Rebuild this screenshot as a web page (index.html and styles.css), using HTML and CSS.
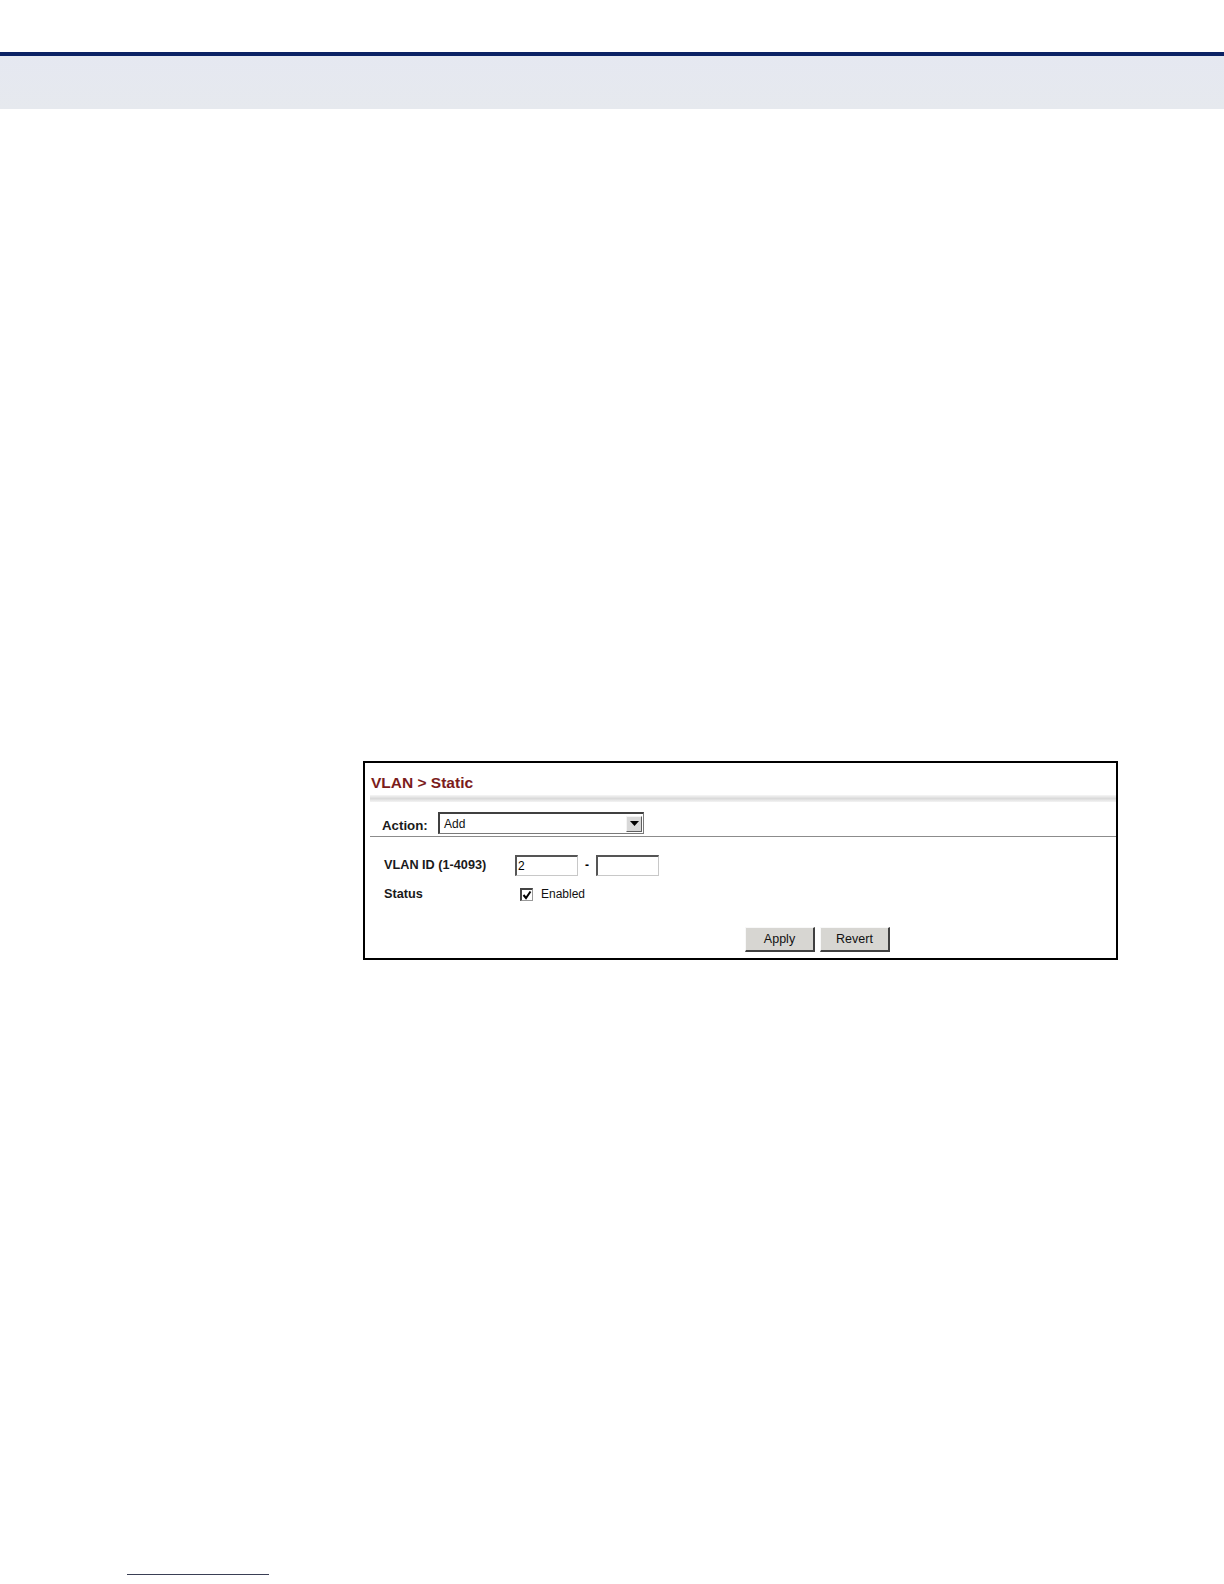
FILE: index.html
```html
<!DOCTYPE html>
<html>
<head>
<meta charset="utf-8">
<link rel="stylesheet" href="styles.css">
</head>
<body>
<div class="page">
  <div class="header">
    <div class="header-rule"></div>
    <div class="header-band"></div>
  </div>
  <div class="content">
    <div class="panel">
      <div class="panel-title">VLAN &gt; Static</div>
      <div class="title-shade"></div>
      <div class="action-row">
        <span class="label action-label">Action:</span>
        <div class="select">
          <span class="select-text">Add</span>
          <span class="select-btn">
            <svg width="9" height="5" viewBox="0 0 9 5"><path d="M0 0h9L4.5 5z" fill="#000"/></svg>
          </span>
        </div>
      </div>
      <div class="divider"></div>
      <div class="form">
        <div class="form-row">
          <span class="label field-label">VLAN ID (1-4093)</span>
          <span class="input">2</span>
          <span class="dash">-</span>
          <span class="input"></span>
        </div>
        <div class="form-row status-row">
          <span class="label field-label">Status</span>
          <span class="checkbox">
            <svg width="10" height="10" viewBox="0 0 10 10"><path d="M1.5 5 L4 8 L8.5 1.5" fill="none" stroke="#000" stroke-width="2"/></svg>
          </span>
          <span class="check-text">Enabled</span>
        </div>
      </div>
      <div class="buttons">
        <span class="btn">Apply</span>
        <span class="btn">Revert</span>
      </div>
    </div>
  </div>
  <div class="footer">
    <div class="footer-line"></div>
  </div>
</div>
</body>
</html>
```
FILE: styles.css
```css
html, body {
  margin: 0;
  padding: 0;
  background: #fff;
}
.page {
  width: 1224px;
  height: 1584px;
  position: relative;
  font-family: "Liberation Sans", Arial, sans-serif;
  color: #000;
}
.header {
  padding-top: 52px;
  width: 1224px;
}
.header-rule {
  height: 4px;
  background: #0b2265;
}
.header-band {
  height: 53px;
  background: linear-gradient(180deg, #e5e8f1 0%, #e6e9ee 100%);
}
.content {
  padding-top: 652px;
  padding-left: 363px;
}
.panel {
  width: 751px;
  height: 195px;
  border: 2px solid #000;
  display: flex;
  flex-direction: column;
}
.panel-title {
  margin: 11px 0 0 6px;
  font-size: 15.5px;
  font-weight: bold;
  color: #7b1c1c;
  height: 17px;
  line-height: 17px;
}
.title-shade {
  margin: 4px 0 0 5px;
  height: 7px;
  background: linear-gradient(180deg, #f6f6f6 0%, #dadada 50%, #f3f3f3 100%);
}
.action-row {
  display: flex;
  align-items: center;
  margin: 10px 0 0 17px;
  height: 22px;
}
.label {
  font-weight: bold;
  font-size: 12.7px;
  color: #1a1a1a;
}
.action-label {
  font-size: 13.3px;
  width: 56px;
  padding-top: 4px;
}
.select {
  width: 203px;
  height: 19px;
  border: 1px solid #7a7a7a;
  border-top-color: #404040;
  border-left-color: #404040;
  border-width: 2px 1px 1px 2px;
  display: flex;
  align-items: center;
  justify-content: space-between;
  background: #fff;
}
.select-text {
  font-size: 12px;
  padding-left: 4px;
  color: #111;
}
.select-btn {
  width: 16px;
  height: 16px;
  margin-right: 1px;
  background: #d8d8d8;
  border: 1px solid #f4f4f4;
  border-right-color: #606060;
  border-bottom-color: #606060;
  box-sizing: border-box;
  display: flex;
  align-items: center;
  justify-content: center;
}
.divider {
  margin: 2px 0 0 5px;
  height: 1px;
  background: #8c8c8c;
}
.form {
  margin: 18px 0 0 19px;
  display: flex;
  flex-direction: column;
  gap: 9px;
}
.form-row {
  display: flex;
  align-items: center;
  height: 20px;
}
.field-label {
  width: 131px;
}
.input {
  width: 59px;
  height: 18px;
  border: 1px solid #c8c8c8;
  border-top: 2px solid #555;
  border-left: 2px solid #555;
  font-size: 12px;
  line-height: 18px;
  padding-left: 1px;
  box-sizing: content-box;
}
.dash {
  width: 18px;
  text-align: center;
  font-size: 12px;
  font-weight: bold;
}
.status-row {
  height: 20px;
}
.checkbox {
  margin-left: 5px;
  width: 10px;
  height: 10px;
  border: 1px solid #999;
  border-top: 2px solid #444;
  border-left: 2px solid #444;
  display: flex;
  align-items: center;
  justify-content: center;
  background: #fff;
}
.check-text {
  margin-left: 8px;
  font-size: 12px;
  color: #111;
}
.buttons {
  display: flex;
  gap: 5px;
  margin: 23px 0 0 380px;
}
.btn {
  width: 67px;
  height: 22px;
  background: #d7d6d2;
  border: 1px solid #f8f8f8;
  border-right: 2px solid #404040;
  border-bottom: 2px solid #404040;
  font-size: 12.5px;
  line-height: 22px;
  text-align: center;
  color: #111;
}
.footer {
  position: absolute;
  left: 127px;
  top: 1574px;
}
.footer-line {
  width: 142px;
  height: 1px;
  background: #3a3f55;
}
```
